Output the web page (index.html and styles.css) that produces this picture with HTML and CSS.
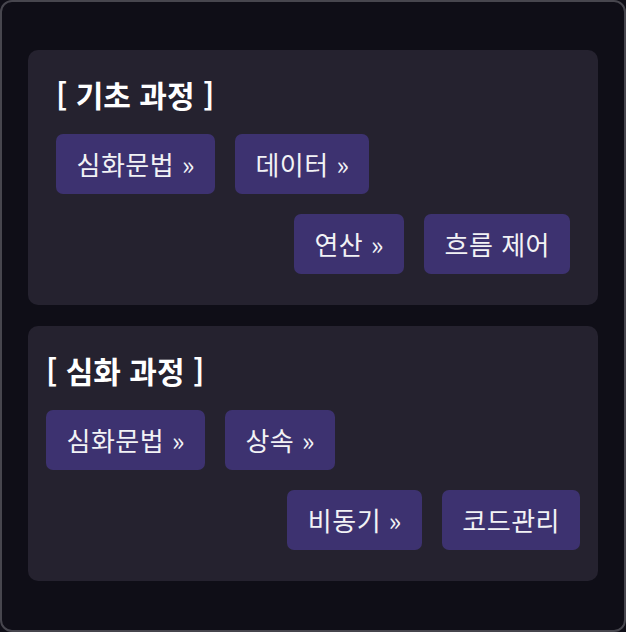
FILE: index.html
```html
<!DOCTYPE html>
<html lang="ko">
<head>
<meta charset="utf-8">
<title>과정 안내</title>
<link rel="stylesheet" href="styles.css">
</head>
<body>
<div class="board">
  <section class="track track-basic">
    <h2 class="track-title">[ 기초 과정 ]</h2>
    <div class="row">
      <a class="chip" href="#">심화문법 »</a>
      <a class="chip" href="#">데이터 »</a>
    </div>
    <div class="row row-end">
      <a class="chip" href="#">연산 »</a>
      <a class="chip" href="#">흐름 제어</a>
    </div>
  </section>
  <section class="track track-advanced">
    <h2 class="track-title">[ 심화 과정 ]</h2>
    <div class="row">
      <a class="chip" href="#">심화문법 »</a>
      <a class="chip" href="#">상속 »</a>
    </div>
    <div class="row row-end">
      <a class="chip" href="#">비동기 »</a>
      <a class="chip" href="#">코드관리</a>
    </div>
  </section>
</div>
</body>
</html>
```
FILE: styles.css
```css
* { box-sizing: border-box; }

html, body {
  margin: 0;
  padding: 0;
  background: #0f0e17;
}

body {
  font-family: "Noto Sans CJK KR", "Noto Sans", sans-serif;
  color: #f2f2f5;
}

.board {
  width: 626px;
  height: 632px;
  border: 2px solid #47464e;
  border-radius: 12px;
  background: #0f0e17;
  padding: 48px 26px;
  display: flex;
  flex-direction: column;
  gap: 21px;
}

.track {
  background: #25222f;
  border-radius: 10px;
  padding: 24px 28px 31px;
  display: flex;
  flex-direction: column;
  gap: 20px;
}

.track-advanced {
  padding-left: 18px;
  padding-right: 18px;
}

.track-title {
  margin: 0;
  font-size: 30px;
  line-height: 40px;
  font-weight: 700;
  color: #ffffff;
}

.row {
  display: flex;
  gap: 20px;
}

.row-end {
  justify-content: flex-end;
}

.chip {
  display: block;
  height: 60px;
  line-height: 60px;
  padding: 0 20px 0 20.5px;
  border-radius: 7px;
  background: #3d3270;
  color: #f2f2f5;
  font-size: 26px;
  letter-spacing: 0.5px;
  text-decoration: none;
  white-space: nowrap;
}
```
